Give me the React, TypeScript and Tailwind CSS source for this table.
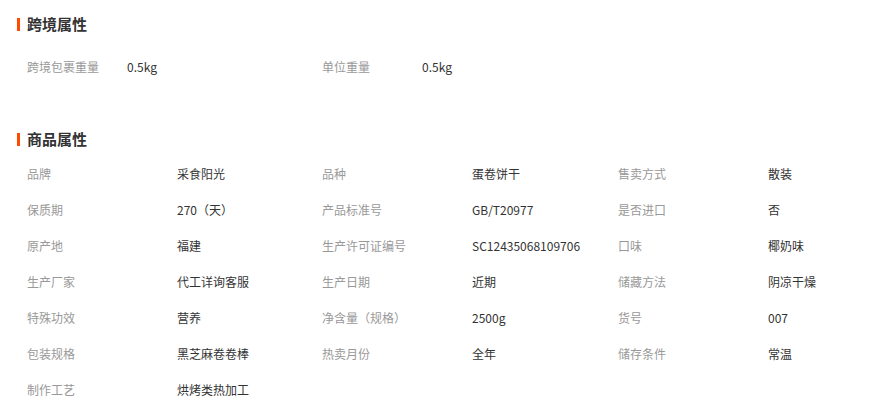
import React from "react";

const font = { fontFamily: '"Noto Sans CJK SC", "Noto Sans", sans-serif' };

const cross = [
  ["跨境包裹重量", "0.5kg"],
  ["单位重量", "0.5kg"],
];

const attrs: [string, string][] = [
  ["品牌", "采食阳光"],
  ["品种", "蛋卷饼干"],
  ["售卖方式", "散装"],
  ["保质期", "270（天）"],
  ["产品标准号", "GB/T20977"],
  ["是否进口", "否"],
  ["原产地", "福建"],
  ["生产许可证编号", "SC12435068109706"],
  ["口味", "椰奶味"],
  ["生产厂家", "代工详询客服"],
  ["生产日期", "近期"],
  ["储藏方法", "阴凉干燥"],
  ["特殊功效", "营养"],
  ["净含量（规格）", "2500g"],
  ["货号", "007"],
  ["包装规格", "黑芝麻卷卷棒"],
  ["热卖月份", "全年"],
  ["储存条件", "常温"],
  ["制作工艺", "烘烤类热加工"],
];

function Heading({ title }: { title: string }) {
  return (
    <div className="flex items-center h-[20px] pl-[17px]">
      <span className="w-[3px] h-[13px] bg-[#ff4a00] mr-[7px]" />
      <span className="text-[15px] font-bold text-[#333] leading-[20px]">{title}</span>
    </div>
  );
}

export default function App() {
  return (
    <div className="w-[872px] h-[413px] bg-white overflow-hidden" style={font}>
      <div className="pt-[14px]">
        <Heading title="跨境属性" />
        <div className="grid grid-cols-[295px_295px_282px] pl-[27px] mt-[15px]">
          {cross.map(([k, v]) => (
            <div key={k} className="flex h-[36px] items-center text-[12px]">
              <span className="w-[100px] text-[#999]">{k}</span>
              <span className="text-[#333]">{v}</span>
            </div>
          ))}
        </div>
      </div>
      <div className="mt-[44px]">
        <Heading title="商品属性" />
        <div className="grid grid-cols-[295px_296px_281px] pl-[27px] mt-[7px]">
          {attrs.map(([k, v]) => (
            <div key={k} className="flex h-[36px] items-center text-[12px]">
              <span className="w-[150px] text-[#999]">{k}</span>
              <span className="text-[#333]">{v}</span>
            </div>
          ))}
        </div>
      </div>
    </div>
  );
}
